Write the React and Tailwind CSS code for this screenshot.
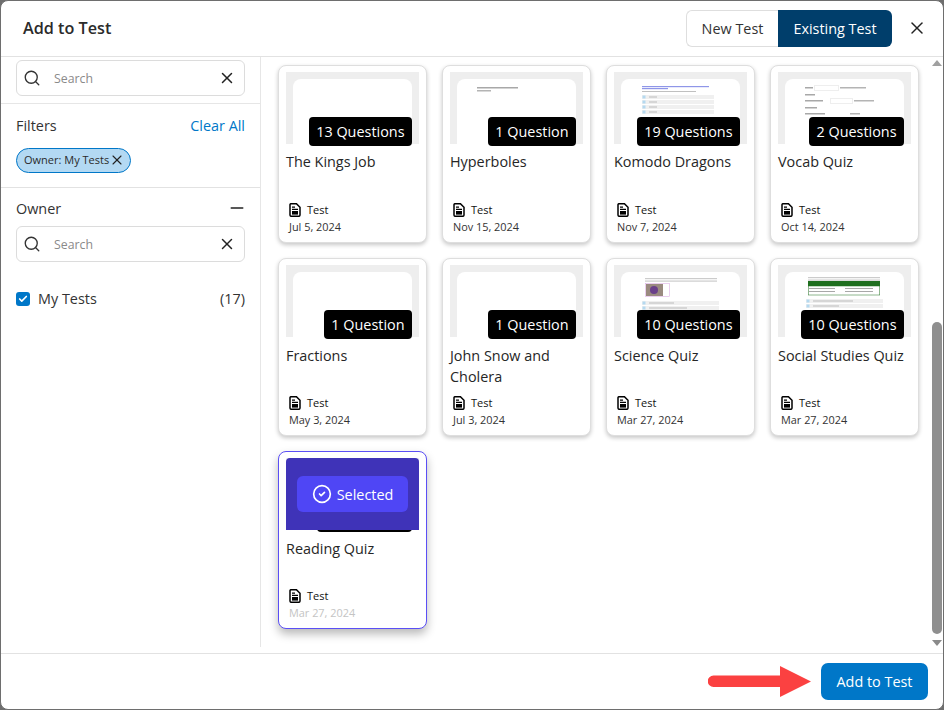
import React from 'react';
import { Search, X, Minus, Check, CircleCheck } from 'lucide-react';

const tests = [
    { title: 'The Kings Job', count: '13 Questions', date: 'Jul 5, 2024', preview: 'blank' },
    { title: 'Hyperboles', count: '1 Question', date: 'Nov 15, 2024', preview: 'hyperboles' },
    { title: 'Komodo Dragons', count: '19 Questions', date: 'Nov 7, 2024', preview: 'komodo' },
    { title: 'Vocab Quiz', count: '2 Questions', date: 'Oct 14, 2024', preview: 'vocab' },
    { title: 'Fractions', count: '1 Question', date: 'May 3, 2024', preview: 'blank' },
    { title: 'John Snow and Cholera', count: '1 Question', date: 'Jul 3, 2024', preview: 'blank' },
    { title: 'Science Quiz', count: '10 Questions', date: 'Mar 27, 2024', preview: 'science' },
    { title: 'Social Studies Quiz', count: '10 Questions', date: 'Mar 27, 2024', preview: 'social' },
    { title: 'Reading Quiz', count: '3 Questions', date: 'Mar 27, 2024', preview: 'blank', selected: true },
];

// tiny page thumbnails, 119 wide: the text in them is not readable so it is drawn as bars
const Preview = ({ kind }) => {
    if (kind === 'hyperboles') {
        return (
            <svg width="119" height="65" className="block">
                <rect x="20" y="8" width="41" height="1.5" fill="#a8a8a8" />
                <rect x="20" y="11" width="14" height="1.5" fill="#b4b4b4" />
            </svg>
        );
    }
    if (kind === 'komodo') {
        return (
            <svg width="119" height="65" className="block">
                <rect x="21" y="7" width="67" height="1.2" fill="#8f96e8" />
                <rect x="21" y="9" width="26" height="1.2" fill="#8f96e8" />
                <rect x="21" y="12" width="54" height="1" fill="#c0c0c0" />
                {[16, 21, 26, 31].map((y) => (
                    <g key={y}>
                        <rect x="21" y={y} width="72" height="4" fill="#f0f0f0" />
                        <rect x="21.5" y={y + 0.5} width="3" height="3" fill="#b5d9f0" />
                        <rect x="28" y={y + 1.5} width="8" height="1" fill="#bcbcbc" />
                    </g>
                ))}
            </svg>
        );
    }
    if (kind === 'vocab') {
        return (
            <svg width="119" height="65" className="block">
                <rect x="20" y="8" width="8" height="1.5" fill="#a8a8a8" />
                <rect x="29.5" y="6.5" width="24" height="5" fill="#fff" stroke="#eeeeee" />
                <rect x="55" y="8" width="26" height="1.5" fill="#b4b4b4" />
                <rect x="20" y="15" width="10" height="1.5" fill="#a8a8a8" />
                <rect x="20" y="21" width="18" height="1.5" fill="#a8a8a8" />
                <rect x="45.5" y="19.5" width="22" height="5" fill="#fff" stroke="#eeeeee" />
                <rect x="69" y="21" width="20" height="1.5" fill="#b4b4b4" />
                <rect x="20" y="28" width="12" height="1.5" fill="#a8a8a8" />
                <rect x="20" y="34" width="20" height="1.5" fill="#a8a8a8" />
                <rect x="65" y="34" width="10" height="1.5" fill="#b4b4b4" />
            </svg>
        );
    }
    if (kind === 'science') {
        return (
            <svg width="119" height="65" className="block">
                <rect x="24" y="6" width="72" height="1.2" fill="#cccccc" />
                <rect x="24" y="8.5" width="72" height="1.2" fill="#cccccc" />
                <rect x="24.5" y="11.5" width="24" height="13" fill="#fff" stroke="#dcb0e4" strokeWidth="0.6" />
                <rect x="25" y="12" width="17" height="12" fill="#9a8a80" />
                <circle cx="33" cy="18" r="4" fill="#6a3f8a" />
                <rect x="21" y="29" width="77" height="4" fill="#f0f0f0" />
                <rect x="21.5" y="29.5" width="3" height="3" fill="#b5d9f0" />
                <rect x="28" y="30.5" width="25" height="1" fill="#bcbcbc" />
                <rect x="21" y="34" width="77" height="4" fill="#f0f0f0" />
                <rect x="21.5" y="34.5" width="3" height="3" fill="#b5d9f0" />
                <rect x="28" y="35.5" width="38" height="1" fill="#bcbcbc" />
            </svg>
        );
    }
    if (kind === 'social') {
        return (
            <svg width="119" height="65" className="block">
                <rect x="23" y="5" width="72" height="1.2" fill="#cccccc" />
                <rect x="23" y="7.5" width="72" height="1.2" fill="#cccccc" />
                <rect x="23" y="9" width="72" height="5" fill="#1f6f1f" />
                <rect x="23.25" y="14" width="71.5" height="9" fill="#fff" stroke="#1f6f1f" strokeWidth="0.5" />
                <rect x="24" y="16" width="26" height="1" fill="#a8a8a8" />
                <rect x="60" y="16" width="28" height="1" fill="#a8a8a8" />
                <rect x="24" y="19" width="26" height="1" fill="#a8a8a8" />
                <rect x="60" y="19" width="28" height="1" fill="#a8a8a8" />
                <rect x="21" y="27" width="77" height="4" fill="#f0f0f0" />
                <rect x="21.5" y="27.5" width="3" height="3" fill="#b5d9f0" />
                <rect x="28" y="28.5" width="40" height="1" fill="#bcbcbc" />
                <rect x="21" y="32" width="77" height="4" fill="#f0f0f0" />
                <rect x="21.5" y="32.5" width="3" height="3" fill="#b5d9f0" />
                <rect x="28" y="33.5" width="26" height="1" fill="#bcbcbc" />
            </svg>
        );
    }
    return null;
};

const DocIcon = () => (
    <svg width="12" height="14" viewBox="0 0 12 14" className="shrink-0">
        <path
            d="M2 .7h5.4L11 4.3V12a1.3 1.3 0 0 1-1.3 1.3H2.3A1.3 1.3 0 0 1 1 12V1.7A1 1 0 0 1 2 .7z"
            fill="#fff"
            stroke="#000"
            strokeWidth="1.5"
        />
        <path d="M3 4.2h3M3 6.4h6" stroke="#000" strokeWidth="1.2" />
        <rect x="3" y="8" width="6" height="3.6" fill="#000" />
    </svg>
);

const TestCard = ({ test }) => (
    <div
        className={`flex h-[178.3px] flex-col rounded-[8px] border bg-white px-[7px] pt-[6px] pb-[7px] ${
            test.selected
                ? 'border-[#5b4ff5] shadow-[0_5px_10px_rgba(0,0,0,0.28)]'
                : 'border-[#dedede] shadow-[0_2px_4px_rgba(0,0,0,0.22)]'
        }`}
    >
        <div className="relative h-[72px] shrink-0 bg-[#eeeeee] px-[7px] pt-[7px]">
            <div className="h-[65px] overflow-hidden rounded-t-[8px] bg-white">
                <Preview kind={test.preview} />
            </div>
            <div className="absolute right-[7px] top-[45px] flex h-[29px] items-center rounded-[4px] bg-black px-[7.5px] pt-[1px] text-[14.4px] text-white">
                {test.count}
            </div>
            {test.selected && (
                <div className="absolute inset-0 flex items-center justify-center rounded-t-[4px] bg-[#3f33b8]">
                    <div className="flex h-[36px] w-[111px] items-center justify-center gap-[5px] rounded-[6px] bg-[#4f46f5] pt-[1px] text-[14.4px] text-white">
                        <CircleCheck size={20} strokeWidth={2} className="-translate-y-px" />
                        Selected
                    </div>
                </div>
            )}
        </div>
        <div className="mt-[7.9px] text-[14.4px] leading-[21px] text-[#262626]">{test.title}</div>
        <div className="mt-auto pl-[3px]">
            <div className="flex h-[16px] items-center gap-[6px] text-[11px] text-[#111]">
                <DocIcon />
                Test
            </div>
            <div className={`mt-[1px] text-[10.9px] leading-[16px] ${test.selected ? 'text-[#c4c4c4]' : 'text-[#333]'}`}>
                {test.date}
            </div>
        </div>
    </div>
);

const SearchBox = () => (
    <div className="flex h-[36px] items-center rounded-[6px] border border-[#dcdcdc] bg-white pl-[6px] pr-[8px]">
        <Search size={18} color="#333" strokeWidth={1.8} />
        <span className="ml-[13px] flex-1 pt-[2px] text-[12.3px] text-[#8a8a8a]">Search</span>
        <X size={18} color="#222" strokeWidth={2} />
    </div>
);

const App = () => {
    return (
        <div className="h-[710px] w-[944px] overflow-hidden bg-[#6e6e6e] font-['Open_Sans',sans-serif]">
            <div className="flex h-[710px] flex-col rounded-[8px] border border-[#6e6e6e] bg-white">
                <div className="flex h-[56px] shrink-0 items-center border-b border-[#e2e2e2] pb-[1px] pl-[22px] pr-[16px]">
                    <h1 className="flex-1 text-[16.2px] font-semibold text-[#2b2b2b]">Add to Test</h1>
                    <div className="flex h-[37px] text-[14.4px]">
                        <div className="flex w-[92px] items-center justify-center rounded-l-[6px] border border-r-0 border-[#dedede] pt-[1px] text-[#333]">
                            New Test
                        </div>
                        <div className="flex w-[114px] items-center justify-center rounded-r-[6px] bg-[#003e6b] pt-[1px] text-white">
                            Existing Test
                        </div>
                    </div>
                    <X size={20} color="#222" strokeWidth={1.8} className="ml-[15px]" />
                </div>

                <div className="flex min-h-0 flex-1">
                    <aside className="mb-[6px] w-[260px] shrink-0 border-r border-[#e6e6e6]">
                        <div className="border-b border-[#e6e6e6] px-[15px] pb-[7px] pt-[3px]">
                            <SearchBox />
                        </div>
                        <div className="border-b border-[#e2e2e2] px-[15px] pb-[14px] pt-[12px]">
                            <div className="flex items-center justify-between text-[14.4px] leading-[19px]">
                                <span className="text-[#333]">Filters</span>
                                <span className="text-[#0077c8]">Clear All</span>
                            </div>
                            <div className="mt-[13px] inline-flex h-[25px] items-center rounded-full border border-[#0077c8] bg-[#b3d9f3] pl-[7px] pr-[4.5px] text-[11px] font-medium text-[#2b2b2b]">
                                Owner: My Tests
                                <X size={16} color="#222" strokeWidth={1.6} className="-translate-y-px" />
                            </div>
                        </div>
                        <div className="px-[15px] pt-[10px]">
                            <div className="flex items-center justify-between text-[14.4px] leading-[19px] text-[#333]">
                                Owner
                                <Minus size={20} color="#222" strokeWidth={1.6} className="mr-[-2px]" />
                            </div>
                            <div className="mt-[8px]">
                                <SearchBox />
                            </div>
                            <div className="mt-[27px] flex items-center text-[14.4px] leading-[19px] text-[#333]">
                                <span className="flex h-[14px] w-[14px] items-center justify-center rounded-[3px] bg-[#0077c8]">
                                    <Check size={10} color="#fff" strokeWidth={4} />
                                </span>
                                <span className="ml-[8px] flex-1">My Tests</span>
                                <span>(17)</span>
                            </div>
                        </div>
                    </aside>

                    <main className="min-w-0 flex-1 pl-[17px] pt-[7.5px]">
                        <div className="grid grid-cols-[repeat(4,149px)] gap-[15px]">
                            {tests.map((test) => (
                                <TestCard key={test.title} test={test} />
                            ))}
                        </div>
                    </main>

                    <div className="mb-[3px] flex w-[14px] shrink-0 flex-col items-center bg-white pl-[1px]">
                        <svg width="10" height="6" viewBox="0 0 10 6" className="mt-[3px]">
                            <path d="M5 0l5 6H0z" fill="#a0a0a0" />
                        </svg>
                        <div className="mt-[256px] h-[312px] w-[10px] rounded-full bg-[#8f8f8f]" />
                        <svg width="10" height="6" viewBox="0 0 10 6" className="mt-[6px]">
                            <path d="M5 6L0 0h10z" fill="#8a8a8a" />
                        </svg>
                    </div>
                </div>

                <div className="flex h-[56px] shrink-0 items-center justify-end gap-[10px] border-t border-[#e2e2e2] pr-[15px]">
                    <svg width="103" height="31" viewBox="0 0 103 31">
                        <path d="M5.5 9.5H72V0l31 15.5L72 31v-10H5.5a5.5 5.5 0 0 1 0-11.5z" fill="#fb4141" />
                    </svg>
                    <button className="h-[37px] w-[107px] rounded-[7px] bg-[#0077c8] text-[14.4px] text-white">Add to Test</button>
                </div>
            </div>
        </div>
    );
};

export default App;
